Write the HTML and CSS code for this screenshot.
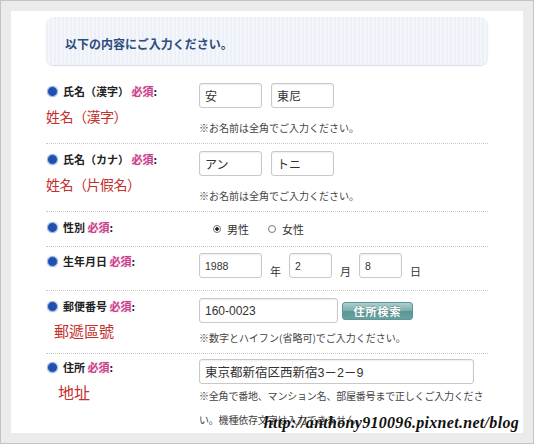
FILE: index.html
```html
<!DOCTYPE html>
<html lang="ja">
<head>
  <meta charset="UTF-8">
  <title>ご入力フォーム</title>
  <link rel="stylesheet" href="styles.css">
</head>
<body>
  <div class="frame">
    <div class="panel">
      <div class="intro">以下の内容にご入力ください。</div>

      <div class="row">
        <div class="label-col">
          <div class="label"><span class="bullet"></span>氏名（漢字） <span class="req">必須</span>:</div>
          <div class="memo">姓名（漢字）</div>
        </div>
        <div class="field-col">
          <div class="field-line">
            <input type="text" class="input" value="安">
            <input type="text" class="input" value="東尼">
          </div>
          <div class="note note-name">※お名前は全角でご入力ください。</div>
        </div>
      </div>

      <div class="row">
        <div class="label-col">
          <div class="label"><span class="bullet"></span>氏名（カナ） <span class="req">必須</span>:</div>
          <div class="memo">姓名（片假名）</div>
        </div>
        <div class="field-col">
          <div class="field-line">
            <input type="text" class="input" value="アン">
            <input type="text" class="input" value="トニ">
          </div>
          <div class="note note-name">※お名前は全角でご入力ください。</div>
        </div>
      </div>

      <div class="row">
        <div class="label-col">
          <div class="label"><span class="bullet"></span>性別 <span class="req">必須</span>:</div>
        </div>
        <div class="field-col">
          <div class="gender">
            <div class="option"><span class="radio radio-on"></span>男性</div>
            <div class="option"><span class="radio"></span>女性</div>
          </div>
        </div>
      </div>

      <div class="row row-date">
        <div class="label-col">
          <div class="label"><span class="bullet"></span>生年月日 <span class="req">必須</span>:</div>
        </div>
        <div class="field-col">
          <div class="field-line date-line">
            <input type="text" class="input input-date" value="1988">
            <span class="unit">年</span>
            <input type="text" class="input input-date input-short" value="2">
            <span class="unit">月</span>
            <input type="text" class="input input-date input-short" value="8">
            <span class="unit">日</span>
          </div>
        </div>
      </div>

      <div class="row">
        <div class="label-col">
          <div class="label"><span class="bullet"></span>郵便番号 <span class="req">必須</span>:</div>
          <div class="memo memo-zip">郵遞區號</div>
        </div>
        <div class="field-col">
          <div class="field-line zip-line">
            <input type="text" class="input input-zip" value="160-0023">
            <button type="button" class="btn">住所検索</button>
          </div>
          <div class="note">※数字とハイフン(省略可)でご入力ください。</div>
        </div>
      </div>

      <div class="row row-address">
        <div class="label-col">
          <div class="label"><span class="bullet"></span>住所 <span class="req">必須</span>:</div>
          <div class="memo memo-addr">地址</div>
        </div>
        <div class="field-col">
          <div class="field-line">
            <input type="text" class="input input-addr" value="東京都新宿区西新宿3－2－9">
          </div>
          <div class="note note-long">※全角で番地、マンション名、部屋番号まで正しくご入力ください。機種依存文字は入力できません。</div>
        </div>
      </div>

      <div class="watermark">http://anthony910096.pixnet.net/blog</div>
    </div>
  </div>
</body>
</html>
```

FILE: styles.css
```css
body {
  margin: 0;
  font-family: "Noto Sans CJK JP", sans-serif;
  color: #333;
}
.frame {
  width: 534px;
  height: 444px;
  box-sizing: border-box;
  padding: 10px;
  border: 1px solid #c4c4c4;
  background-color: #ebebeb;
}
.panel {
  position: relative;
  height: 422px;
  box-sizing: border-box;
  padding: 6px 35px 0;
  overflow: hidden;
  background-color: #fff;
}
.intro {
  height: 48px;
  box-sizing: border-box;
  padding: 19px 0 0 19px;
  margin-bottom: 11px;
  border-radius: 8px;
  background: repeating-linear-gradient(90deg, #ecf0f7 0 2px, #f4f6fb 2px 4px);
  box-shadow: 0 1px 1px #d6dbe4;
  font-size: 12px;
  line-height: 16px;
  font-weight: bold;
  color: #2e4c7c;
}
.row {
  display: flex;
  padding: 7px 0 3px;
  border-top: 1px dotted #c9c9c9;
}
.intro + .row {
  border-top: none;
}
.row-date {
  padding: 6px 0 12px;
}
.row-address {
  padding-top: 5px;
}
.label-col {
  width: 153px;
  flex-shrink: 0;
}
.label {
  font-size: 11px;
  line-height: 16px;
  font-weight: bold;
  color: #222;
  white-space: nowrap;
}
.bullet {
  display: inline-block;
  width: 9px;
  height: 9px;
  margin: 0 5px 0 1px;
  vertical-align: -1px;
  border: 1px solid #bccde9;
  border-radius: 50%;
  background-color: #1f50b0;
  box-shadow: 0 0 1px #7d9bd4;
}
.req {
  color: #c8418c;
  text-shadow: 0 0 2px #f6c9de;
}
.memo {
  margin-top: 6px;
  font-family: "Noto Sans CJK TC", sans-serif;
  font-size: 14px;
  line-height: 22px;
  letter-spacing: -0.5px;
  color: #c4302b;
}
.memo-zip {
  padding-left: 8px;
  font-size: 15px;
  letter-spacing: 0;
}
.memo-addr {
  padding-left: 12px;
  font-size: 16px;
  letter-spacing: 0;
}
.field-col {
  flex: 1;
  display: flex;
  flex-direction: column;
  align-items: flex-start;
}
.field-line {
  display: flex;
  align-items: flex-end;
  gap: 9px;
}
.input {
  width: 63px;
  height: 25px;
  box-sizing: border-box;
  margin: 0;
  padding: 0 5px;
  border: 1px solid #c8c8c8;
  border-radius: 3px;
  box-shadow: inset 0 1px 2px rgba(0, 0, 0, 0.07);
  background-color: #fff;
  font-family: "Liberation Sans", "Noto Sans CJK JP", sans-serif;
  font-size: 12px;
  color: #333;
  outline: none;
}
.input-date {
  font-size: 10.5px;
}
.input-short {
  width: 43px;
}
.date-line {
  gap: 8px;
}
.unit {
  font-size: 11px;
  line-height: 14px;
  color: #333;
}
.zip-line {
  align-items: center;
  gap: 4px;
}
.input-zip {
  width: 139px;
}
.btn {
  width: 71px;
  height: 18px;
  padding: 0;
  border: 1px solid #5b9796;
  border-radius: 3px;
  background: linear-gradient(#abd0cf, #7cadac 50%, #5b9594 52%, #67a1a0);
  font-family: inherit;
  font-size: 11px;
  line-height: 16px;
  font-weight: bold;
  letter-spacing: 1px;
  color: #fff;
  text-shadow: 0 -1px 0 rgba(0, 0, 0, 0.2);
}
.input-addr {
  width: 275px;
  font-size: 12.5px;
}
.note {
  margin-top: 3px;
  font-size: 10px;
  line-height: 24px;
  color: #444;
}
.note-name {
  margin-top: 8px;
}
.note-long {
  margin-top: 0;
  letter-spacing: -0.2px;
}
.gender {
  display: flex;
  gap: 19px;
  height: 24px;
  padding-left: 14px;
  font-size: 11px;
  line-height: 20px;
}
.option {
  display: flex;
  align-items: center;
  gap: 6px;
  height: 20px;
}
.radio {
  width: 8px;
  height: 8px;
  box-sizing: border-box;
  border: 1px solid #777;
  border-radius: 50%;
  background-color: #fff;
}
.radio-on {
  background: radial-gradient(circle, #222 0 1.5px, #fff 2px);
}
.watermark {
  position: absolute;
  right: 4px;
  bottom: 1px;
  font-family: "Liberation Serif", serif;
  font-size: 16px;
  font-style: italic;
  font-weight: bold;
  letter-spacing: 0.3px;
  color: #111;
}
```
